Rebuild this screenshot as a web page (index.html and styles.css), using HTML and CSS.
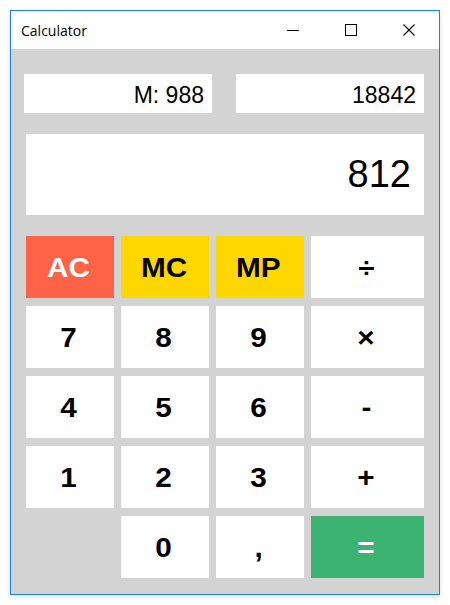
FILE: index.html
```html
<!DOCTYPE html>
<html>
<head>
<meta charset="utf-8">
<title>Calculator</title>
<link rel="stylesheet" href="styles.css">
</head>
<body>
<div class="window">
  <div class="titlebar">
    <span class="title">Calculator</span>
    <div class="caption">
      <span class="cbtn"><svg width="12" height="12" viewBox="0 0 12 12"><line x1="0" y1="6.5" x2="12" y2="6.5" stroke="#000" stroke-width="1"/></svg></span>
      <span class="cbtn"><svg width="12" height="12" viewBox="0 0 12 12"><rect x="0.5" y="0.5" width="11" height="11" fill="none" stroke="#000" stroke-width="1"/></svg></span>
      <span class="cbtn"><svg width="12" height="12" viewBox="0 0 12 12"><path d="M0.5 0.5 L11.5 11.5 M11.5 0.5 L0.5 11.5" stroke="#000" stroke-width="1.1" fill="none"/></svg></span>
    </div>
  </div>
  <div class="content">
    <div class="memrow">
      <div class="mem">M: 988</div>
      <div class="mem">18842</div>
    </div>
    <div class="display">812</div>
    <div class="keypad">
      <div class="key key-red"><span class="lbl">AC</span></div>
      <div class="key key-gold"><span class="lbl">MC</span></div>
      <div class="key key-gold"><span class="lbl">MP</span></div>
      <div class="key"><span class="lbl">÷</span></div>
      <div class="key"><span class="lbl">7</span></div>
      <div class="key"><span class="lbl">8</span></div>
      <div class="key"><span class="lbl">9</span></div>
      <div class="key"><span class="lbl">×</span></div>
      <div class="key"><span class="lbl">4</span></div>
      <div class="key"><span class="lbl">5</span></div>
      <div class="key"><span class="lbl">6</span></div>
      <div class="key"><span class="lbl">-</span></div>
      <div class="key"><span class="lbl">1</span></div>
      <div class="key"><span class="lbl">2</span></div>
      <div class="key"><span class="lbl">3</span></div>
      <div class="key"><span class="lbl">+</span></div>
      <div class="blank"></div>
      <div class="key"><span class="lbl">0</span></div>
      <div class="key"><span class="lbl">,</span></div>
      <div class="key key-green"><span class="lbl">=</span></div>
    </div>
  </div>
</div>
</body>
</html>
```

FILE: styles.css
```css
* { box-sizing: border-box; }
body {
  margin: 0;
  background: #ffffff;
}
.window {
  margin: 10px;
  width: 430px;
  height: 585px;
  border: 1px solid #1883d7;
  display: flex;
  flex-direction: column;
  box-shadow: 0 2px 6px rgba(0, 0, 0, 0.12);
}
.titlebar {
  height: 38px;
  background: #ffffff;
  display: flex;
  align-items: center;
  justify-content: space-between;
}
.title {
  margin-left: 10px;
  font-family: "Open Sans", "Noto Sans", sans-serif;
  font-size: 14px;
  color: #000;
  padding-top: 1px;
}
.caption {
  display: flex;
  height: 100%;
  margin-right: 1px;
}
.cbtn {
  width: 58px;
  height: 100%;
  display: flex;
  align-items: center;
  justify-content: center;
}
.cbtn svg { display: block; }
.content {
  flex: 1;
  background: #d3d3d3;
  padding: 25px 15px 0 13px;
}
.memrow {
  display: grid;
  grid-template-columns: 188px 188px;
  column-gap: 24px;
}
.mem {
  background: #ffffff;
  height: 39px;
  padding: 3px 8px 0 0;
  line-height: 36px;
  text-align: right;
  font-family: "Liberation Sans", Arial, sans-serif;
  font-size: 23px;
  color: #000;
}
.display {
  margin: 21px 0 0 2px;
  height: 81px;
  background: #ffffff;
  line-height: 81px;
  padding-right: 13px;
  text-align: right;
  font-family: "Liberation Sans", Arial, sans-serif;
  font-size: 38px;
  color: #000;
}
.keypad {
  margin: 21px 0 0 2px;
  display: grid;
  grid-template-columns: 88px 88px 88px 113px;
  grid-auto-rows: 62px;
  column-gap: 7px;
  row-gap: 8px;
}
.key {
  background: #ffffff;
  display: flex;
  align-items: center;
  justify-content: center;
  font-family: "Liberation Sans", Arial, sans-serif;
  font-weight: bold;
  font-size: 27px;
  color: #000;
  padding: 2px 3px 0 0;
}
.lbl {
  display: inline-block;
  transform: scaleX(1.1);
}
.key-red { background: #ff6347; color: #ffffff; }
.key-gold { background: #ffd700; }
.key-green { background: #3cb371; color: #ffffff; }
```
